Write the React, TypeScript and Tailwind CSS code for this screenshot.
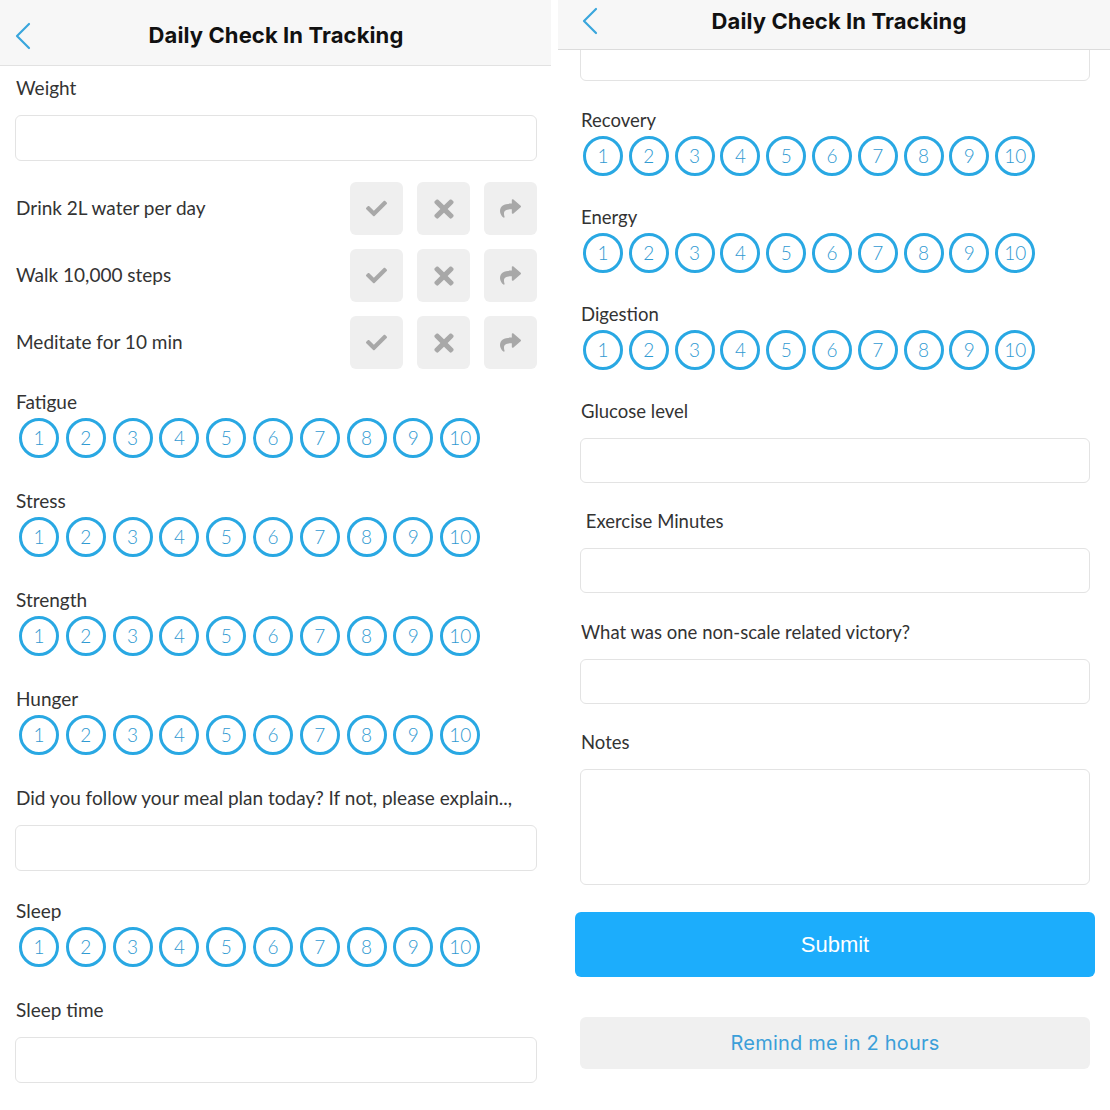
import { FaCheck, FaTimes, FaShare } from "react-icons/fa";

const labelFont = "font-['Lato','Noto_Sans',sans-serif]";
const titleFont = "font-['Inter','Noto_Sans',sans-serif]";

function BackChevron() {
  return (
    <svg width="16" height="28" viewBox="0 0 16 28" fill="none">
      <polyline
        points="14,2 2,14 14,26"
        stroke="#3aa6dc"
        strokeWidth="2.2"
        strokeLinecap="round"
        strokeLinejoin="round"
      />
    </svg>
  );
}

function Header({ tall }: { tall: boolean }) {
  return (
    <div
      className={
        tall
          ? "flex h-[66px] items-center border-b border-[#e2e2e2] bg-[#f7f7f7] pl-[15px] pr-[30px] pt-[6px]"
          : "flex h-[50px] items-center border-b border-[#dcdcdc] bg-[#f7f7f7] pl-[24px] pr-[30px] pb-[7px]"
      }
    >
      <BackChevron />
      <h1
        className={`${titleFont} flex-1 text-center text-[22px] font-bold tracking-[0.1px] text-[#111]`}
      >
        Daily Check In Tracking
      </h1>
    </div>
  );
}

function Label({ text, className = "" }: { text: string; className?: string }) {
  return (
    <p className={`${labelFont} h-[24px] leading-[24px] text-[#333] ${className}`}>
      {text}
    </p>
  );
}

function Field({ className = "" }: { className?: string }) {
  return <div className={`rounded-[6px] border border-[#e3e3e3] bg-white ${className}`} />;
}

function Scale({ gap, className = "" }: { gap: string; className?: string }) {
  return (
    <div className={`flex ${gap} ${className}`}>
      {[1, 2, 3, 4, 5, 6, 7, 8, 9, 10].map((n) => (
        <div
          key={n}
          className={`${labelFont} flex h-[40px] w-[40px] items-center justify-center rounded-full border-[3px] border-[#29a8e3] text-[19px] font-light text-[#2f9ad2]`}
        >
          {n}
        </div>
      ))}
    </div>
  );
}

function HabitRow({ text, className = "" }: { text: string; className?: string }) {
  return (
    <div className={`flex items-center ${className}`}>
      <span className={`${labelFont} flex-1 text-[19px] text-[#333]`}>{text}</span>
      <div className="flex gap-[14px]">
        <div className="flex h-[53px] w-[53px] items-center justify-center rounded-[6px] bg-[#efefef] text-[#a8a8a8]">
          <FaCheck size={21} />
        </div>
        <div className="flex h-[53px] w-[53px] items-center justify-center rounded-[6px] bg-[#efefef] text-[#a8a8a8]">
          <FaTimes size={28} />
        </div>
        <div className="flex h-[53px] w-[53px] items-center justify-center rounded-[6px] bg-[#efefef] text-[#a8a8a8]">
          <FaShare size={21} />
        </div>
      </div>
    </div>
  );
}

function LeftScreen() {
  return (
    <div className="h-[1110px] w-[551px] overflow-hidden bg-white">
      <Header tall />
      <div className="pl-[15px] pr-[14px]">
        <Label text="Weight" className="mt-[10px] pl-px text-[19px]" />
        <Field className="mt-[15px] h-[46px]" />
        <HabitRow text="Drink 2L water per day" className="mt-[21px] pl-px" />
        <HabitRow text="Walk 10,000 steps" className="mt-[14px] pl-px" />
        <HabitRow text="Meditate for 10 min" className="mt-[14px] pl-px" />

        {["Fatigue", "Stress", "Strength", "Hunger"].map((name, i) => (
          <div key={name} className={i === 0 ? "mt-[21px]" : "mt-[31px]"}>
            <Label text={name} className="pl-px text-[19px]" />
            <Scale gap="gap-[6.8px]" className="mt-[4px] pl-[4px]" />
          </div>
        ))}

        <Label
          text="Did you follow your meal plan today? If not, please explain..,"
          className="mt-[31px] pl-px text-[19px]"
        />
        <Field className="mt-[15px] h-[46px]" />

        <Label text="Sleep" className="mt-[28px] pl-px text-[19px]" />
        <Scale gap="gap-[6.8px]" className="mt-[4px] pl-[4px]" />

        <Label text="Sleep time" className="mt-[31px] pl-px text-[19px]" />
        <Field className="mt-[15px] h-[46px]" />
      </div>
    </div>
  );
}

function RightScreen() {
  return (
    <div className="h-[1110px] flex-1 overflow-hidden bg-white">
      <Header tall={false} />
      <div className="overflow-hidden pl-[22px] pr-[20px]">
        <Field className="-mt-[15px] h-[46px]" />

        {["Recovery", "Energy", "Digestion"].map((name, i) => (
          <div key={name} className={i === 0 ? "mt-[27px]" : "mt-[29px]"}>
            <Label text={name} className="pl-px text-[18.5px]" />
            <Scale gap="gap-[5.8px]" className="mt-[4px] pl-[3px]" />
          </div>
        ))}

        <Label text="Glucose level" className="mt-[29px] pl-px text-[18.5px]" />
        <Field className="mt-[15px] h-[45px]" />

        <Label
          text=" Exercise Minutes"
          className="mt-[26px] whitespace-pre pl-px text-[18.5px]"
        />
        <Field className="mt-[15px] h-[45px]" />

        <Label
          text="What was one non-scale related victory?"
          className="mt-[27px] pl-px text-[18.5px]"
        />
        <Field className="mt-[15px] h-[45px]" />

        <Label text="Notes" className="mt-[26px] pl-px text-[18.5px]" />
        <Field className="mt-[15px] h-[116px]" />

        <button className="-ml-[5px] -mr-[5px] mt-[27px] flex h-[65px] w-[calc(100%+10px)] items-center justify-center rounded-[6px] bg-[#1cadfc] font-['Liberation_Sans',Arial,sans-serif] text-[22px] text-white">
          Submit
        </button>

        <button
          className={`${titleFont} mt-[40px] flex h-[52px] w-full items-center justify-center rounded-[6px] bg-[#f0f0f0] text-[20px] tracking-[0.2px] text-[#3b9fd9]`}
        >
          Remind me in 2 hours
        </button>
      </div>
    </div>
  );
}

export default function App() {
  return (
    <main className="flex h-[1110px] w-[1110px] gap-[7px] bg-white">
      <LeftScreen />
      <RightScreen />
    </main>
  );
}
